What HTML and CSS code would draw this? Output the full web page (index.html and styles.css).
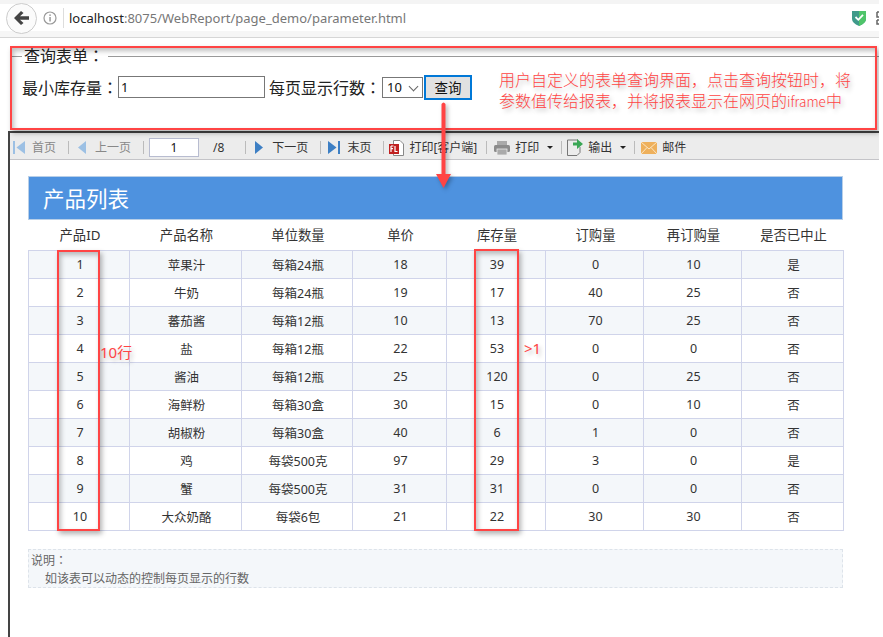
FILE: index.html
```html
<!DOCTYPE html>
<html>
<head>
	<meta charset="utf-8">
	<title>parameter</title>
	<link rel="stylesheet" href="styles.css">
</head>
<body>
	<div class="page">
		<!-- browser bar -->
		<div class="browser">
			<div class="back">
				<svg width="16" height="14" viewBox="0 0 16 14"><path d="M7 0 L0 7 L7 14 L9.5 12 L6 8.7 H15 V5.3 H6 L9.5 2 Z" fill="#444"/></svg>
			</div>
			<svg class="info" width="14" height="14" viewBox="0 0 14 14"><circle cx="7" cy="7" r="6" fill="none" stroke="#999" stroke-width="1.2"/><rect x="6.3" y="6" width="1.5" height="4.5" fill="#999"/><rect x="6.3" y="3.4" width="1.5" height="1.5" fill="#999"/></svg>
			<div class="url"><span class="host">localhost</span>:8075/WebReport/page_demo/parameter.html</div>
			<svg class="shield" width="15" height="16" viewBox="0 0 15 16"><path d="M0 1 H14 V9 Q14 13 7 16 Q0 13 0 9 Z" fill="#3f9a8a"/><path d="M7 1 H14 V9 Q14 13 7 16 Z" fill="#4fc46a"/><path d="M3.5 7 L6.3 9.8 L11 4.8" fill="none" stroke="#fff" stroke-width="1.8"/></svg>
			<svg class="qr" width="3" height="14" viewBox="0 0 3 14"><path d="M1 1 H3 M1 1 V6 H3 M1 9 H3 M1 9 V13 H3" fill="none" stroke="#666" stroke-width="1.5"/></svg>
		</div>

		<!-- query form -->
		<form class="query">
			<fieldset class="query-set">
				<legend>查询表单：</legend>
				<div class="query-row">
					<label>最小库存量：</label>
					<input class="query-input" type="text" value="1">
					<label class="query-label2">每页显示行数：</label>
					<div class="select-wrap">
						<select class="query-select"><option>10</option></select>
					</div>
					<button class="query-btn" type="button">查询</button>
				</div>
			</fieldset>
		</form>

		<!-- report frame -->
		<div class="frame">
			<div class="toolbar">
				<svg width="12" height="13" viewBox="0 0 12 13"><rect width="2" height="13" fill="#9cc0e4"/><path d="M12 0 V13 L3.5 6.5 Z" fill="#9cc0e4"/></svg>
				<span class="tb-text off tb-mid">首页</span>
				<i class="sep"></i>
				<svg width="8" height="13" viewBox="0 0 8 13"><path d="M8 0 V13 L0 6.5 Z" fill="#9cc0e4"/></svg>
				<span class="tb-text off">上一页</span>
				<i class="sep tb-s5"></i>
				<input class="tb-page" type="text" value="1">
				<span class="tb-total">/8</span>
				<i class="sep"></i>
				<svg width="8" height="13" viewBox="0 0 8 13"><path d="M0 0 V13 L8 6.5 Z" fill="#3d7fc4"/></svg>
				<span class="tb-text">下一页</span>
				<i class="sep tb-s7"></i>
				<svg width="12" height="13" viewBox="0 0 12 13"><path d="M0 0 V13 L8.5 6.5 Z" fill="#3d7fc4"/><rect x="10" width="2" height="13" fill="#3d7fc4"/></svg>
				<span class="tb-text tb-mid">末页</span>
				<i class="sep tb-s5"></i>
				<svg width="15" height="16" viewBox="0 0 15 16"><path d="M4.5 .5 H11 L14.5 4 V15.5 H4.5 Z" fill="#fff" stroke="#888"/><rect y="4" width="10" height="10" fill="#c02020"/><path d="M2 6 V12 M2 6 H4.5 M2 8.7 H4 M6 6 V11.5 H8.5" fill="none" stroke="#fff" stroke-width="1.2"/></svg>
				<span class="tb-text tb-tight tb-r10">打印[客户端]</span>
				<i class="sep tb-s7"></i>
				<svg width="16" height="14" viewBox="0 0 16 14"><rect x="3" width="10" height="4" fill="#aaa"/><rect y="4" width="16" height="7" rx="1.5" fill="#8c8c8c"/><rect x="3" y="8" width="10" height="6" fill="#aaa" stroke="#ececec" stroke-width=".8"/></svg>
				<span class="tb-text tb-tight">打印</span>
				<i class="caret"></i>
				<i class="sep tb-s5"></i>
				<svg width="16" height="17" viewBox="0 0 16 17"><path d="M.5 1 H11 M.5 1 V16.5 H10 L13 13.5 V8" fill="none" stroke="#777"/><path d="M6 3.5 H10 V0 L16 5 L10 10 V6.5 H6 Z" fill="#3aa655"/></svg>
				<span class="tb-text tb-tight">输出</span>
				<i class="caret"></i>
				<i class="sep tb-s6"></i>
				<svg width="16" height="12" viewBox="0 0 16 12"><rect width="16" height="12" fill="#eeb05c"/><path d="M0 0 L8 7 L16 0 M0 12 L6 5.5 M16 12 L10 5.5" fill="none" stroke="#fbe6c4"/></svg>
				<span class="tb-text tb-tight">邮件</span>
			</div>

			<div class="report">
				<div class="report-title">产品列表</div>
				<table class="report-table">
					<colgroup>
						<col class="c1"><col class="c2"><col class="c3"><col class="c4"><col class="c5"><col class="c6"><col class="c7"><col class="c8">
					</colgroup>
					<thead>
						<tr><th>产品ID</th><th>产品名称</th><th>单位数量</th><th>单价</th><th>库存量</th><th>订购量</th><th>再订购量</th><th>是否已中止</th></tr>
					</thead>
					<tbody>
						<tr><td>1</td><td>苹果汁</td><td>每箱24瓶</td><td>18</td><td>39</td><td>0</td><td>10</td><td>是</td></tr>
						<tr><td>2</td><td>牛奶</td><td>每箱24瓶</td><td>19</td><td>17</td><td>40</td><td>25</td><td>否</td></tr>
						<tr><td>3</td><td>蕃茄酱</td><td>每箱12瓶</td><td>10</td><td>13</td><td>70</td><td>25</td><td>否</td></tr>
						<tr><td>4</td><td>盐</td><td>每箱12瓶</td><td>22</td><td>53</td><td>0</td><td>0</td><td>否</td></tr>
						<tr><td>5</td><td>酱油</td><td>每箱12瓶</td><td>25</td><td>120</td><td>0</td><td>25</td><td>否</td></tr>
						<tr><td>6</td><td>海鲜粉</td><td>每箱30盒</td><td>30</td><td>15</td><td>0</td><td>10</td><td>否</td></tr>
						<tr><td>7</td><td>胡椒粉</td><td>每箱30盒</td><td>40</td><td>6</td><td>1</td><td>0</td><td>否</td></tr>
						<tr><td>8</td><td>鸡</td><td>每袋500克</td><td>97</td><td>29</td><td>3</td><td>0</td><td>是</td></tr>
						<tr><td>9</td><td>蟹</td><td>每袋500克</td><td>31</td><td>31</td><td>0</td><td>0</td><td>否</td></tr>
						<tr><td>10</td><td>大众奶酪</td><td>每袋6包</td><td>21</td><td>22</td><td>30</td><td>30</td><td>否</td></tr>
					</tbody>
				</table>
				<div class="note">
					<div class="note-head">说明：</div>
					<div class="note-body">如该表可以动态的控制每页显示的行数</div>
				</div>
			</div>
		</div>

		<!-- red annotations drawn over the shot -->
		<div class="mark mark-form"></div>
		<div class="mark mark-id"></div>
		<div class="mark mark-stock"></div>
		<div class="mark-text mark-desc">
			<div>用户自定义的表单查询界面，点击查询按钮时，将</div>
			<div>参数值传给报表，并将报表显示在网页的<span class="mark-latin">iframe</span>中</div>
		</div>
		<div class="mark-text mark-rows">10行</div>
		<div class="mark-text mark-gt">&gt;1</div>
		<svg class="mark-arrow" width="20" height="88" viewBox="0 0 20 88"><path d="M7.5 2 Q9.5 -1 11.5 2 V74 H7.5 Z" fill="#f44"/><path d="M2 72 H17 L9.5 86 Z" fill="#f44"/></svg>
	</div>
</body>
</html>
```
FILE: styles.css
```css
* {
	margin: 0;
	padding: 0;
	box-sizing: border-box;
}

body {
	font-family: "Noto Sans", "Noto Sans CJK SC", sans-serif;
	color: #333;
	background: #fff;
}

.page {
	width: 879px;
	height: 637px;
	position: relative;
	overflow: hidden;
}

/* browser bar */
.browser {
	height: 38px;
	background: #fff;
	border-top: 4px solid #f4f4f4;
	border-bottom: 1px solid #d6d6d6;
	box-shadow: inset 0 -6px 0 #f6f6f6;
	display: flex;
	align-items: center;
	padding-left: 6px;
	padding-bottom: 5px;
}
.back {
	width: 31px;
	height: 31px;
	border: 1px solid #ccc;
	border-radius: 50%;
	background: #fbfbfb;
	display: flex;
	align-items: center;
	justify-content: center;
}
.info {
	margin-left: 6px;
}
.url {
	margin-left: 6px;
	padding-left: 5px;
	border-left: 1px solid #ddd;
	font-size: 13px;
	line-height: 20px;
	color: #777;
	flex: 1;
}
.host {
	color: #222;
}
.shield {
	margin-right: 9px;
}

/* query form */
.query {
	height: 93px;
	padding: 8px 0 0 12px;
	font-family: "Noto Sans", "Noto Sans CJK JP", sans-serif;
}
.query-set {
	border: 0;
	border-top: 1px solid #999;
	height: 72px;
	padding: 0 0 0 10px;
}
.query-set legend {
	font-size: 16px;
	line-height: 20px;
	color: #222;
	margin-left: 0;
	padding: 0 4px 0 2px;
}
.query-row {
	display: flex;
	align-items: center;
	font-size: 16px;
	color: #222;
	margin-top: 8px;
	height: 26px;
}
.query-input {
	width: 147px;
	height: 22px;
	border: 1px solid #777;
	padding-left: 2px;
	font: 13px "Noto Sans", sans-serif;
	color: #111;
}
.query-label2 {
	margin-left: 4px;
}
.select-wrap {
	width: 41px;
	height: 21px;
	margin-left: 1px;
	position: relative;
}
.select-wrap::after {
	content: "";
	position: absolute;
	right: 6px;
	top: 6px;
	width: 6px;
	height: 6px;
	border-right: 1px solid #666;
	border-bottom: 1px solid #666;
	transform: rotate(45deg);
	pointer-events: none;
}
.query-select {
	width: 41px;
	height: 21px;
	display: block;
	appearance: none;
	border: 1px solid #777;
	border-radius: 0;
	background: #fff;
	padding-left: 4px;
	font: 13px "Noto Sans", sans-serif;
	color: #111;
}
.query-btn {
	width: 48px;
	height: 25px;
	margin-left: 1px;
	border: 2px solid #0078d7;
	background: #e1e1e1;
	font-family: "Noto Sans CJK SC", sans-serif;
	font-size: 13.5px;
	color: #111;
}

/* report frame */
.frame {
	height: 506px;
	margin-left: 8px;
	border-left: 2px solid #444;
	border-top: 2px solid #444;
}
.toolbar {
	height: 27px;
	background: #ececec;
	border-bottom: 1px solid #c4c4c8;
	display: flex;
	align-items: center;
	padding: 3px 0 0 3px;
	font-size: 12px;
}
.tb-text {
	margin-left: 9px;
	margin-right: 12px;
	line-height: 16px;
	color: #333;
}
.tb-text.off {
	color: #888;
}
.tb-mid {
	margin-left: 7px;
}
.tb-tight {
	margin-left: 5px;
}
.tb-r10 {
	margin-right: 9px;
}
.sep {
	width: 1px;
	height: 13px;
	background: #bbb;
	margin-right: 9px;
}
.tb-s5 { margin-right: 5px; }
.tb-s6 { margin-right: 6px; }
.tb-s7 { margin-right: 7px; }
.tb-page {
	width: 50px;
	height: 19px;
	border: 1px solid #b8bcd0;
	background: #fff;
	text-align: center;
	font: 12px "Noto Sans", sans-serif;
	color: #111;
}
.tb-total {
	margin-left: 14px;
	margin-right: 21px;
	color: #333;
}
.caret {
	width: 0;
	height: 0;
	border-left: 3px solid transparent;
	border-right: 3px solid transparent;
	border-top: 3px solid #222;
	margin-left: -4px;
	margin-right: 8px;
}

/* report */
.report {
	padding: 16px 0 0 18px;
	width: 833px;
}
.report-title {
	height: 44px;
	background: #4e92df;
	border: 1px solid #b8cfe8;
	padding-left: 14px;
	font-size: 21.5px;
	line-height: 43px;
	color: #fff;
}
.report-table {
	width: 815px;
	table-layout: fixed;
	border-collapse: collapse;
	font-size: 12.5px;
	text-align: center;
}
.c1 { width: 101px; }
.c2 { width: 112px; }
.c3 { width: 111px; }
.c4 { width: 94px; }
.c5 { width: 99px; }
.c6 { width: 98px; }
.c7 { width: 98px; }
.c8 { width: 102px; }
.report-table th {
	height: 30px;
	padding-left: 2px;
	font-size: 13.33px;
	font-weight: normal;
	color: #333;
	border-bottom: 1px solid #d0d4ea;
}
.report-table td {
	height: 28px;
	padding-left: 2px;
	border: 1px solid #d0d4ea;
	color: #333;
}
.report-table tbody tr:nth-child(odd) {
	background: #f4f7fa;
}
.note {
	margin-top: 18px;
	width: 815px;
	height: 39px;
	background: #f4f7fa;
	border: 1px dashed #dde3ea;
	padding: 2px 0 0 2px;
	font-family: "Noto Sans", "Noto Sans CJK JP", sans-serif;
	font-size: 12px;
	line-height: 18px;
	color: #666;
}
.note-body {
	padding-left: 14px;
}

/* annotations */
.mark {
	position: absolute;
	border: 2px solid #f44;
	box-shadow: 2px 3px 5px rgba(0,0,0,0.3), inset 2px 3px 5px rgba(0,0,0,0.25);
}
.mark-form {
	left: 10px;
	top: 46px;
	width: 867px;
	height: 84px;
}
.mark-id {
	left: 57px;
	top: 250px;
	width: 43px;
	height: 281px;
}
.mark-stock {
	left: 474px;
	top: 249px;
	width: 45px;
	height: 282px;
}
.mark-text {
	position: absolute;
	color: #f44;
	text-shadow: 2px 3px 4px rgba(0,0,0,0.25);
	white-space: nowrap;
}
.mark-desc {
	left: 499px;
	top: 69px;
	font-size: 16px;
	line-height: 21px;
	font-family: "Noto Sans CJK SC", sans-serif;
	font-weight: 300;
}
.mark-latin {
	font-size: 13.5px;
}
.mark-rows {
	left: 100px;
	top: 342px;
	font-size: 15px;
	line-height: 20px;
}
.mark-gt {
	left: 524px;
	top: 338px;
	font-size: 15px;
	line-height: 20px;
}
.mark-arrow {
	position: absolute;
	left: 434px;
	top: 102px;
	filter: drop-shadow(2px 2px 2px rgba(0,0,0,0.3));
}
```
